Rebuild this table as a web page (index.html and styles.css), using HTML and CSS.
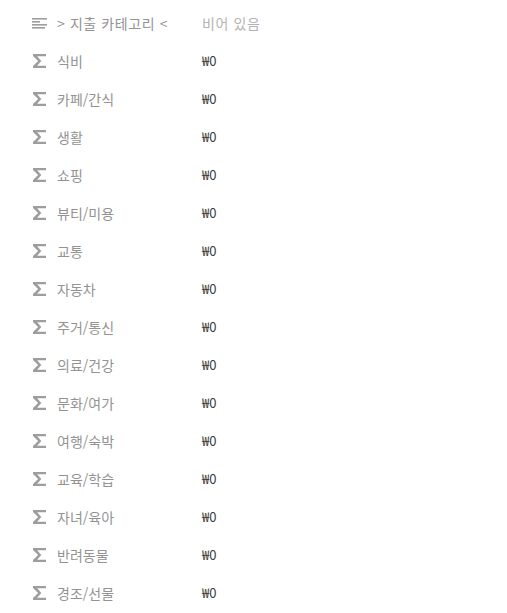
FILE: index.html
```html
<!DOCTYPE html>
<html lang="ko">
<head>
<meta charset="utf-8">
<link rel="stylesheet" href="styles.css">
</head>
<body>
<div class="list">
  <div class="row header">
    <div class="label">
      <svg class="icon" width="15" height="11" viewBox="0 0 15 11"><rect x="0" y="0" width="15" height="1.6" fill="#9e9e9e"/><rect x="0" y="3" width="8" height="1.6" fill="#9e9e9e"/><rect x="0" y="6" width="15" height="1.6" fill="#9e9e9e"/><rect x="0" y="9" width="13" height="1.6" fill="#9e9e9e"/></svg>
      <span class="name head">&gt; 지출 카테고리 &lt;</span>
    </div>
    <div class="value empty">비어 있음</div>
  </div>
  <div class="row"><div class="label"><svg class="icon sig" width="13" height="14" viewBox="0 0 13 14"><path d="M0 0H13V2.2H4.2L8.3 7L4.2 11.8H13V14H0V12L5.1 7L0 2Z" fill="#9e9e9e"/></svg><span class="name">식비</span></div><div class="value">₩0</div></div>
  <div class="row"><div class="label"><svg class="icon sig" width="13" height="14" viewBox="0 0 13 14"><path d="M0 0H13V2.2H4.2L8.3 7L4.2 11.8H13V14H0V12L5.1 7L0 2Z" fill="#9e9e9e"/></svg><span class="name">카페/간식</span></div><div class="value">₩0</div></div>
  <div class="row"><div class="label"><svg class="icon sig" width="13" height="14" viewBox="0 0 13 14"><path d="M0 0H13V2.2H4.2L8.3 7L4.2 11.8H13V14H0V12L5.1 7L0 2Z" fill="#9e9e9e"/></svg><span class="name">생활</span></div><div class="value">₩0</div></div>
  <div class="row"><div class="label"><svg class="icon sig" width="13" height="14" viewBox="0 0 13 14"><path d="M0 0H13V2.2H4.2L8.3 7L4.2 11.8H13V14H0V12L5.1 7L0 2Z" fill="#9e9e9e"/></svg><span class="name">쇼핑</span></div><div class="value">₩0</div></div>
  <div class="row"><div class="label"><svg class="icon sig" width="13" height="14" viewBox="0 0 13 14"><path d="M0 0H13V2.2H4.2L8.3 7L4.2 11.8H13V14H0V12L5.1 7L0 2Z" fill="#9e9e9e"/></svg><span class="name">뷰티/미용</span></div><div class="value">₩0</div></div>
  <div class="row"><div class="label"><svg class="icon sig" width="13" height="14" viewBox="0 0 13 14"><path d="M0 0H13V2.2H4.2L8.3 7L4.2 11.8H13V14H0V12L5.1 7L0 2Z" fill="#9e9e9e"/></svg><span class="name">교통</span></div><div class="value">₩0</div></div>
  <div class="row"><div class="label"><svg class="icon sig" width="13" height="14" viewBox="0 0 13 14"><path d="M0 0H13V2.2H4.2L8.3 7L4.2 11.8H13V14H0V12L5.1 7L0 2Z" fill="#9e9e9e"/></svg><span class="name">자동차</span></div><div class="value">₩0</div></div>
  <div class="row"><div class="label"><svg class="icon sig" width="13" height="14" viewBox="0 0 13 14"><path d="M0 0H13V2.2H4.2L8.3 7L4.2 11.8H13V14H0V12L5.1 7L0 2Z" fill="#9e9e9e"/></svg><span class="name">주거/통신</span></div><div class="value">₩0</div></div>
  <div class="row"><div class="label"><svg class="icon sig" width="13" height="14" viewBox="0 0 13 14"><path d="M0 0H13V2.2H4.2L8.3 7L4.2 11.8H13V14H0V12L5.1 7L0 2Z" fill="#9e9e9e"/></svg><span class="name">의료/건강</span></div><div class="value">₩0</div></div>
  <div class="row"><div class="label"><svg class="icon sig" width="13" height="14" viewBox="0 0 13 14"><path d="M0 0H13V2.2H4.2L8.3 7L4.2 11.8H13V14H0V12L5.1 7L0 2Z" fill="#9e9e9e"/></svg><span class="name">문화/여가</span></div><div class="value">₩0</div></div>
  <div class="row"><div class="label"><svg class="icon sig" width="13" height="14" viewBox="0 0 13 14"><path d="M0 0H13V2.2H4.2L8.3 7L4.2 11.8H13V14H0V12L5.1 7L0 2Z" fill="#9e9e9e"/></svg><span class="name">여행/숙박</span></div><div class="value">₩0</div></div>
  <div class="row"><div class="label"><svg class="icon sig" width="13" height="14" viewBox="0 0 13 14"><path d="M0 0H13V2.2H4.2L8.3 7L4.2 11.8H13V14H0V12L5.1 7L0 2Z" fill="#9e9e9e"/></svg><span class="name">교육/학습</span></div><div class="value">₩0</div></div>
  <div class="row"><div class="label"><svg class="icon sig" width="13" height="14" viewBox="0 0 13 14"><path d="M0 0H13V2.2H4.2L8.3 7L4.2 11.8H13V14H0V12L5.1 7L0 2Z" fill="#9e9e9e"/></svg><span class="name">자녀/육아</span></div><div class="value">₩0</div></div>
  <div class="row"><div class="label"><svg class="icon sig" width="13" height="14" viewBox="0 0 13 14"><path d="M0 0H13V2.2H4.2L8.3 7L4.2 11.8H13V14H0V12L5.1 7L0 2Z" fill="#9e9e9e"/></svg><span class="name">반려동물</span></div><div class="value">₩0</div></div>
  <div class="row"><div class="label"><svg class="icon sig" width="13" height="14" viewBox="0 0 13 14"><path d="M0 0H13V2.2H4.2L8.3 7L4.2 11.8H13V14H0V12L5.1 7L0 2Z" fill="#9e9e9e"/></svg><span class="name">경조/선물</span></div><div class="value">₩0</div></div>
</div>
</body>
</html>
```
FILE: styles.css
```css
html, body {
  margin: 0;
  padding: 0;
  background: #fff;
}
body {
  font-family: "Noto Sans CJK KR", "Noto Sans", sans-serif;
  font-size: 14px;
  color: #8c8c8c;
}
.list {
  display: flex;
  flex-direction: column;
  padding: 4px 0 0 32px;
}
.row {
  display: flex;
  align-items: center;
  height: 38px;
}
.label {
  display: flex;
  align-items: center;
  width: 170px;
}
.icon {
  flex: none;
  width: 15px;
  height: 11px;
  margin-right: 10px;
}
.icon.sig {
  width: 13px;
  height: 14px;
  margin-left: 1px;
  margin-right: 11px;
}
.name {
  color: #939393;
  line-height: 20px;
}
.name.head {
  letter-spacing: 0.6px;
}
.value {
  color: #3a3a3a;
  font-size: 13px;
  line-height: 20px;
}
.value.empty {
  font-size: 14px;
  letter-spacing: 0.6px;
  color: #b3b3b3;
}
```
